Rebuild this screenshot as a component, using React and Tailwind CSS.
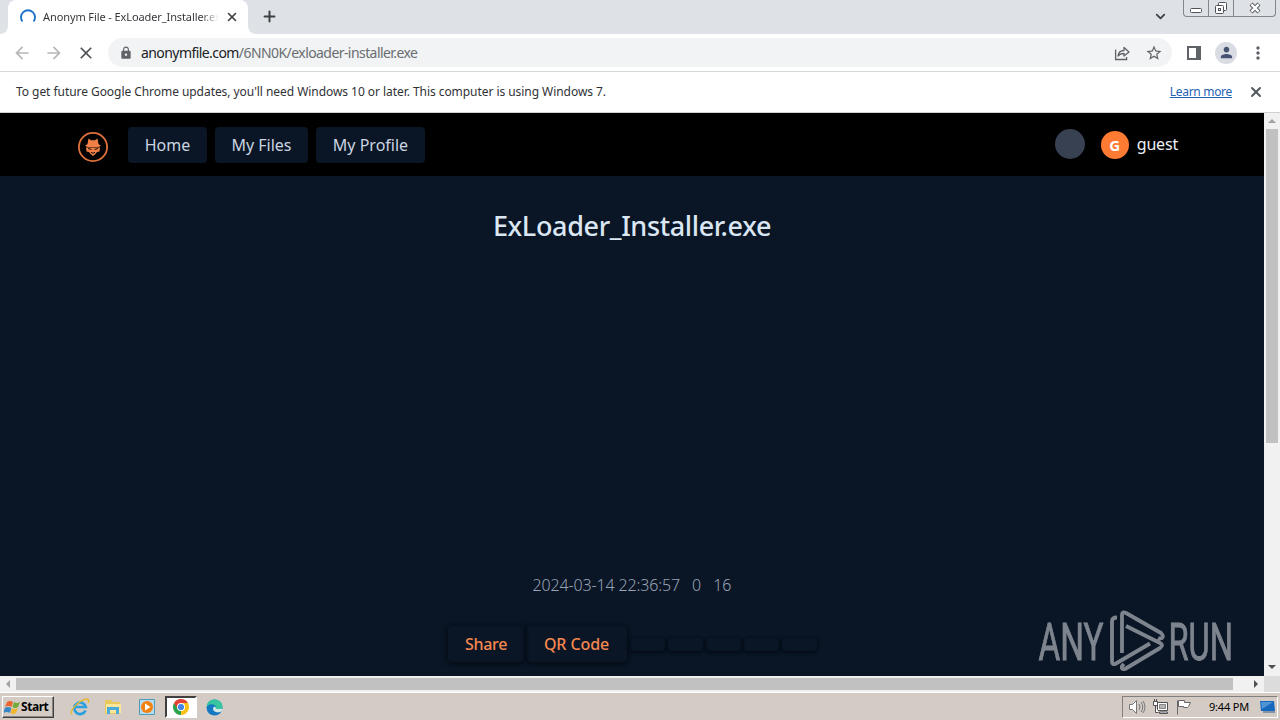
import { ChevronDown, Plus, X } from "lucide-react";
import { MdArrowBack, MdArrowForward, MdClose, MdLock, MdMoreVert, MdPerson, MdStarBorder } from "react-icons/md";

function TabStrip() {
  return (
    <div className="flex h-[34px] items-start bg-[#dee1e6]">
      <div className="h-full w-2 bg-white">
        <div className="h-full rounded-br-lg bg-[#dee1e6]" />
      </div>
      <div className="flex h-full w-60 items-center rounded-t-lg bg-white pl-3 pr-2">
        <svg width="16" height="16" viewBox="0 0 16 16" fill="none" className="shrink-0">
          <path d="M2.400 12.500A7 7 0 1 1 13.600 12.500" stroke="#1a73c8" strokeWidth="1.9" />
        </svg>
        <span className="ml-[7px] w-[176px] overflow-hidden whitespace-nowrap bg-gradient-to-r from-[#303236] from-90% to-transparent bg-clip-text font-['Noto_Sans',sans-serif] text-[11px] tracking-[-0.1px] text-transparent">
          Anonym File - ExLoader_Installer.exe
        </span>
        <X size={14} strokeWidth={2.8} className="ml-[6px] shrink-0 text-[#3c4043]" />
      </div>
      <div className="h-full w-2 bg-white">
        <div className="h-full rounded-bl-lg bg-[#dee1e6]" />
      </div>
      <Plus size={17} strokeWidth={2.8} className="ml-[5px] mt-2 text-[#3c4043]" />
      <ChevronDown size={15} strokeWidth={2.8} className="ml-auto mr-[15px] mt-[9px] text-[#3c4043]" />
      <div className="flex h-[17px] w-[93px] rounded-b-[4px] border border-t-0 border-[#85878b] text-[#4f5359]">
        <div className="flex w-[25px] justify-center border-r border-[#85878b]">
          <svg width="14" height="16" fill="none" stroke="currentColor">
            <rect x="1.5" y="8.5" width="11" height="4" rx="1" fill="#fff" />
          </svg>
        </div>
        <div className="flex w-[25px] justify-center border-r border-[#85878b]">
          <svg width="14" height="16" fill="none" stroke="currentColor">
            <rect x="4.5" y="2.5" width="8" height="8" rx="1" fill="#fff" />
            <rect x="1.5" y="5.5" width="8" height="8" rx="1" fill="#fff" />
            <rect x="4.5" y="8.5" width="2" height="2" />
          </svg>
        </div>
        <div className="flex flex-1 justify-center">
          <svg width="14" height="16" fill="none">
            <path d="M3 4l8 8M11 4l-8 8" stroke="#4f5359" strokeWidth="4.2" />
            <path d="M3.4 4.4l7.2 7.2M10.6 4.4l-7.2 7.2" stroke="#fff" strokeWidth="2.3" />
          </svg>
        </div>
      </div>
      <div className="w-1" />
    </div>
  );
}

function Toolbar() {
  return (
    <div className="flex h-[38px] items-center border-b border-[#d5d8d9] bg-white pl-3 text-[#5f6368]">
      <MdArrowBack size={20} className="text-[#b6b8ba]" />
      <MdArrowForward size={20} className="ml-3 text-[#b6b8ba]" />
      <MdClose size={20} className="ml-3 text-[#505459]" />
      <div className="ml-3 flex h-[29px] w-[1064px] items-center rounded-full bg-[#f1f3f4] pl-[11px] pr-[9px]">
        <MdLock size={14} />
        <span className="ml-2 whitespace-nowrap font-['Noto_Sans',sans-serif] text-sm tracking-[-0.57px] text-[#6a6e72]">
          <span className="text-[#202124]">anonymfile.com</span>/6NN0K/exloader-installer.exe
        </span>
        <svg width="16" height="16" viewBox="0 0 16 16" fill="none" stroke="currentColor" strokeWidth="1.3" className="ml-auto">
          <path d="M1.6 4.5v10h11V12" />
          <path d="M4 11c.5-4 3-5.500 6-5.500V2.500L15 7l-5 4V8.500C7.500 8.500 5.500 9 4 11Z" strokeLinejoin="round" />
        </svg>
        <MdStarBorder size={18} className="ml-[15px]" />
      </div>
      <svg width="14" height="14" className="ml-[15px]">
        <path d="M0 0h14v14H0z" fill="currentColor" />
        <path d="M2 2h7v10H2z" fill="#fff" />
      </svg>
      <div className="ml-[14px] flex size-[22px] items-center justify-center rounded-full bg-[#dadce4]">
        <MdPerson size={17} className="text-[#465373]" />
      </div>
      <MdMoreVert size={20} className="ml-[11px]" />
    </div>
  );
}

function UpdateNotice() {
  return (
    <div className="flex h-[41px] items-center border-b border-[#cfd2d1] bg-white pl-4 pr-4 font-['Noto_Sans',sans-serif] text-xs">
      <span className="whitespace-nowrap tracking-[-0.053px] text-[#303236]">
        To get future Google Chrome updates, you'll need Windows 10 or later. This computer is using Windows 7.
      </span>
      <span className="ml-auto tracking-[-0.3px] text-[#2462b5] underline">Learn more</span>
      <X size={16} strokeWidth={2.8} className="ml-4 text-[#54575b]" />
    </div>
  );
}

function FoxLogo() {
  return (
    <svg width="32" height="32" viewBox="0 0 32 32" fill="none">
      <circle cx="16" cy="16" r="14.100" stroke="#e0703c" strokeWidth="1.8" />
      <path d="M11.500 7.500l3 2 1.500-.5 1.500.5 3-2 1 5.500 2.500 1.800-2.500 1.200h-11L8 14.800 10.500 13z" fill="#f08045" />
      <path d="M9 16.500h14l-.5 4-2.500.5-1.500 2L16 25l-2.500-2-1.500-2-2.500-.5z" fill="#f08045" />
      <path d="M11 17.500l3.500 1M21 17.500l-3.500 1M14 21.300l2 1 2-1" stroke="#180804" strokeWidth="1" />
    </svg>
  );
}

function Navbar() {
  const tab = "flex h-9 items-center justify-center rounded bg-[#0a1525]";
  return (
    <nav className="flex h-[63px] items-start bg-black pl-[77px] font-['Noto_Sans',sans-serif] text-base text-[#cbd5e1]">
      <div className="mt-[18px]">
        <FoxLogo />
      </div>
      <div className="ml-[19px] mt-[14px] flex gap-2">
        <div className={`${tab} w-[79px]`}>Home</div>
        <div className={`${tab} w-[93px]`}>My Files</div>
        <div className={`${tab} w-[109px]`}>My Profile</div>
      </div>
      <div className="ml-auto mr-[86px] mt-4 flex items-center">
        <div className="size-[30px] rounded-full bg-[#374151]" />
        <div className="ml-4 mt-[2px] flex size-7 items-center justify-center rounded-full bg-[#ff7a33] text-[15px] font-bold text-white">
          G
        </div>
        <span className="ml-2 tracking-[-0.2px] text-[#edf0f5]">guest</span>
      </div>
    </nav>
  );
}

function FilePage() {
  const btn = "flex h-9 items-center justify-center rounded shadow-[0_1px_4px_1px_#040b15]";
  return (
    <main className="flex min-h-0 flex-1 flex-col items-center bg-[#0a1525] font-['Noto_Sans',sans-serif]">
      <h1 className="mt-8 text-[27px] font-medium leading-9 tracking-[-0.35px] text-[#dbe6f3]">ExLoader_Installer.exe</h1>
      <div className="mt-[329px] flex h-6 items-center gap-3 text-base font-light text-[#98a4b5]">
        <span className="tracking-[-0.14px]">2024-03-14 22:36:57</span>
        <span>0</span>
        <span>16</span>
      </div>
      <div className="mt-[29px] flex items-center text-base font-medium text-[#f5884f]">
        <div className={`${btn} w-[76px] pl-px tracking-[-0.3px]`}>Share</div>
        <div className={`${btn} ml-[3px] w-[100px] tracking-[-0.1px]`}>QR Code</div>
        <div className="ml-[3px] flex gap-[3px]">
          {[0, 1, 2, 3, 4].map((i) => (
            <div key={i} className="h-[13px] w-[35px] rounded shadow-[0_1px_3px_1px_#040b15]" />
          ))}
        </div>
      </div>
    </main>
  );
}

function Watermark() {
  return (
    <svg className="absolute left-[1030px] top-[596px] opacity-50" width="220" height="90" viewBox="1030 596 220 90" fill="none">
      <g fill="#f1f3f6" stroke="#f1f3f6" strokeWidth="0.8" fontFamily="Roboto, sans-serif" fontSize="52.500">
        <text x="1038.500" y="660" textLength="65" lengthAdjust="spacingAndGlyphs">ANY</text>
        <text x="1168.500" y="660" textLength="64.500" lengthAdjust="spacingAndGlyphs">RUN</text>
      </g>
      <path
        d="M1117 617.500q-5 0-5 4v40q0 4 4 2l34-20M1122 653V615q0-4 4-2l35 20q3 3 1 5-2 1-4 0M1126 626l34 17q4 2 0 5l-35 21q-4 1-3-3l2-2"
        stroke="#f1f3f6"
        strokeWidth="3.800"
        strokeLinejoin="round"
      />
    </svg>
  );
}

function Arrow({ d, color = "#505050" }) {
  return (
    <svg width="16" height="16" viewBox="0 0 16 16">
      <path d={d} fill={color} />
    </svg>
  );
}

function TaskbarApps() {
  return (
    <div className="ml-4 flex items-center">
      <svg width="20" height="20" viewBox="0 0 20 20" fill="none">
        <path d="M15.500 13.500A5.800 5.800 0 1 1 15.800 10H5.500" stroke="#2ba0e0" strokeWidth="2.700" />
        <path d="M2 17C-1 14 10 2 17 2c2 0 2 2 1 4" stroke="#e7b72c" strokeWidth="1.400" />
      </svg>
      <svg width="18" height="18" viewBox="0 0 18 18" className="ml-[14px]">
        <path d="M1 4V2h6l2 2h7v12H1z" fill="#e9c75c" />
        <path d="M2 6h15v9H2z" fill="#f9e69b" />
        <path d="M3 16V9h12v7h-3v-4H6v4z" fill="#4aaad8" />
      </svg>
      <svg width="16" height="16" viewBox="0 0 16 16" className="ml-[17px]">
        <path d="M.5.500h15v15H.500z" fill="#b9dced" stroke="#4d9ac3" />
        <circle cx="8" cy="8" r="6" fill="#f18112" />
        <path d="M6 4.500l5.500 3.500L6 11.500z" fill="#fff" />
      </svg>
      <div className="ml-[10px] flex h-[22px] w-8 items-center justify-center border-2 border-b-white border-l-[#404040] border-r-white border-t-[#404040] bg-white">
        <svg width="16" height="16" viewBox="0 0 16 16">
          <path d="M8 8L1.070 4A8 8 0 0 1 14.930 4z" fill="#e34133" />
          <path d="M8 8L1.070 4A8 8 0 0 0 8 16l3.500-6z" fill="#2ba24c" />
          <path d="M8 8v8A8 8 0 0 0 14.930 4H8z" fill="#fbc116" />
          <path d="M1.070 4l3.500 6L8 4z" fill="#e34133" />
          <circle cx="8" cy="8" r="4" fill="#fff" />
          <circle cx="8" cy="8" r="3.100" fill="#4285e8" />
        </svg>
      </div>
      <svg width="17" height="17" viewBox="0 0 17 17" className="ml-[9px]">
        <circle cx="8.500" cy="8.500" r="8" fill="#1479c2" />
        <path d="M.7 8C1 3 4 .5 8.500.500c5 0 8 3.500 8 7 0 3-2 4-5 4-2 0-2.500-1-1.500-2.200C11 6 4 3 .7 8z" fill="#38c5a0" />
        <path d="M8 7.500c-3 4 2 7.500 7.500 5l1-2.500H11c-1 0-1.600-.8-1-1.500z" fill="#d5e8e8" />
      </svg>
    </div>
  );
}

function Tray() {
  return (
    <div className="ml-auto mr-[2px] flex h-[22px] w-[156px] items-center border border-b-white border-l-[#808080] border-r-white border-t-[#808080] pl-[5px]">
      <svg width="18" height="18" viewBox="0 0 18 18" fill="none" stroke="#77777a">
        <path d="M1.500 6.500h3l4-4v13l-4-4h-3z" fill="#fff" />
        <path d="M11 6q2 3 0 6M13 4q3.500 5 0 10M15 3q4 6 0 12" />
      </svg>
      <svg width="18" height="18" viewBox="0 0 18 18" fill="none" stroke="#505055" className="ml-[6px]">
        <path d="M5.500 4.500h10v8h-10z" fill="#fff" />
        <path d="M7.500 6.500h6v4h-6z" fill="#b5b5b5" stroke="#858585" />
        <path d="M7.500 15.500h8v-1.500h-8z" fill="#fff" />
        <path d="M1.500 3.500h4v4h-4zM2.500 1v3M4.500 1v3M3.500 7.500v7h3" fill="#fff" />
      </svg>
      <svg width="18" height="18" viewBox="0 0 18 18" fill="#fff" stroke="#66666a" className="ml-[5px]">
        <path d="M2.500 2.500v14M3.500 2.500h6v2h6l-2 4-1 1h-4v-1h-5z" />
      </svg>
      <span className="ml-4 whitespace-nowrap font-['Noto_Sans',sans-serif] text-[11px] tracking-[-0.2px] text-black">9:44 PM</span>
      <svg width="17" height="14" viewBox="0 0 17 14" className="ml-auto mr-px">
        <path d="M1 1h14l1 10H2z" fill="#1668bd" />
        <path d="M2 2h12L3 9z" fill="#5094d4" />
        <path d="M4 12h12" stroke="#355f88" />
      </svg>
    </div>
  );
}

function Taskbar() {
  return (
    <div className="flex h-7 items-start border-t border-white bg-[#d4ccc4] pl-[2px] pt-[3px]">
      <div className="flex h-[22px] w-[52px] items-center border border-b-[#404040] border-l-white border-r-[#404040] border-t-white pl-px shadow-[inset_-1px_-1px_#8a8580]">
        <svg width="17" height="17" viewBox="0 0 17 17" className="shrink-0">
          <path d="M3 3q3-2 6 0L7.500 8Q4 6 1 8z" fill="#ec652e" />
          <path d="M10 3q3 2 6 0l-2 5q-3 2-5.500 0z" fill="#72aa3a" />
          <path d="M.8 9q3-2 6.500 0L6 14q-3-2-6.500 0z" fill="#3886c8" />
          <path d="M8 9q3 2 6 0l-2 5q-3 2-5.500 0z" fill="#f1b72c" />
        </svg>
        <span className="font-['Noto_Sans',sans-serif] text-xs font-bold tracking-[-0.45px] text-black">Start</span>
      </div>
      <TaskbarApps />
      <Tray />
    </div>
  );
}

export default function App() {
  return (
    <div className="relative flex h-[720px] w-[1280px] flex-col overflow-hidden bg-white">
      <TabStrip />
      <Toolbar />
      <UpdateNotice />
      <div className="flex h-[563px]">
        <div className="flex w-[1264px] flex-col">
          <Navbar />
          <FilePage />
        </div>
        <div className="flex w-4 flex-col items-center bg-[#f1f1f1]">
          <Arrow d="M4 10h8L8 6z" color="#a3a3a3" />
          <div className="h-[314px] w-3 bg-[#c1c1c1]" />
          <div className="mt-auto">
            <Arrow d="M4 5h8L8 9z" />
          </div>
        </div>
      </div>
      <div className="flex h-4 items-center bg-[#f1f1f1]">
        <Arrow d="M10 4v8L6 8z" color="#a3a3a3" />
        <div className="h-3 w-[1217px] bg-[#c1c1c1]" />
        <div className="ml-auto">
          <Arrow d="M6 4v8l4-4z" />
        </div>
        <div className="h-4 w-4 bg-[#dcdcdc]" />
      </div>
      <Taskbar />
      <Watermark />
    </div>
  );
}
